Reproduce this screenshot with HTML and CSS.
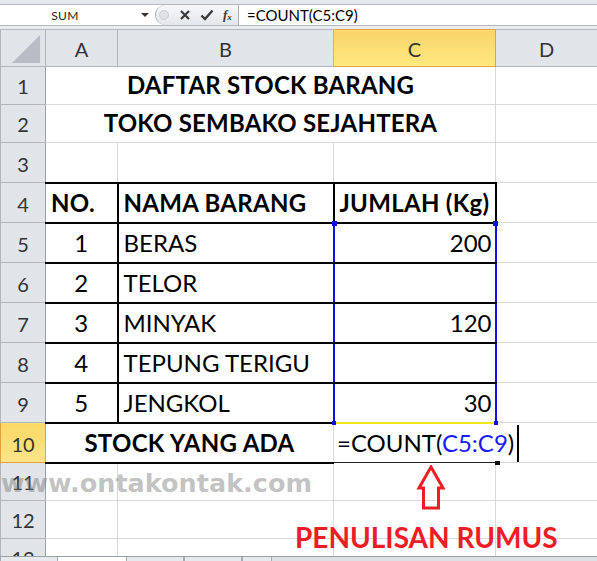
FILE: index.html
```html
<!DOCTYPE html>
<html>
<head>
<meta charset="utf-8">
<link rel="stylesheet" href="styles.css">
</head>
<body>
<div class="app">
  <div class="top"></div>
  <div class="fbar">
    <div class="namebox"><span class="name">SUM</span><span class="dd"></span></div>
    <div class="btns">
      <span class="grip"></span>
      <svg class="ico" width="12" height="12" viewBox="0 0 12 12"><path d="M2 2 L10 10 M10 2 L2 10" stroke="#3a3a3a" stroke-width="2.2" fill="none"/></svg>
      <svg class="ico" width="14" height="12" viewBox="0 0 14 12"><path d="M1.5 6.5 L5 10 L12.5 1.5" stroke="#3a3a3a" stroke-width="2.4" fill="none"/></svg>
      <span class="fx">f<sub>x</sub></span>
    </div>
    <div class="formula">=COUNT(C5:C9)</div>
  </div>
  <div class="sep"></div>
  <table class="sheet">
    <colgroup><col class="c0"><col class="c1"><col class="c2"><col class="c3"><col class="c4"></colgroup>
    <tr class="hdr">
      <td class="corner"><svg width="29" height="28" viewBox="0 0 29 28"><polygon points="28,0 28,28 0,28" fill="#b8bdc5"/></svg></td>
      <td class="ch">A</td><td class="ch">B</td><td class="ch chsel">C</td><td class="ch">D</td>
    </tr>
    <tr class="r38">
      <td class="rh">1</td><td colspan="3" class="title">DAFTAR STOCK BARANG</td><td></td>
    </tr>
    <tr class="r38">
      <td class="rh">2</td><td colspan="3" class="title">TOKO SEMBAKO SEJAHTERA</td><td></td>
    </tr>
    <tr class="r40">
      <td class="rh">3</td><td></td><td></td><td></td><td></td>
    </tr>
    <tr class="r40">
      <td class="rh">4</td>
      <td class="bx bold left">NO.</td>
      <td class="bx bold left">NAMA BARANG</td>
      <td class="bx bold left">JUMLAH (Kg)</td>
      <td></td>
    </tr>
    <tr class="r40">
      <td class="rh">5</td><td class="bx center">1</td><td class="bx bnr left">BERAS</td>
      <td class="bx rng right"><span class="mk tl"></span><span class="mk tr"></span>200</td><td></td>
    </tr>
    <tr class="r40">
      <td class="rh">6</td><td class="bx center">2</td><td class="bx bnr left">TELOR</td>
      <td class="bx rng right"></td><td></td>
    </tr>
    <tr class="r40">
      <td class="rh">7</td><td class="bx center">3</td><td class="bx bnr left">MINYAK</td>
      <td class="bx rng right">120</td><td></td>
    </tr>
    <tr class="r40">
      <td class="rh">8</td><td class="bx center">4</td><td class="bx bnr left">TEPUNG TERIGU</td>
      <td class="bx rng right"></td><td></td>
    </tr>
    <tr class="r40">
      <td class="rh">9</td><td class="bx center">5</td><td class="bx bnr left">JENGKOL</td>
      <td class="bx rng rlast right"><span class="mk bl"></span><span class="mk br"></span>30</td><td></td>
    </tr>
    <tr class="r40">
      <td class="rh rhsel">10</td>
      <td colspan="2" class="bx bnr bold center">STOCK YANG ADA</td>
      <td class="edit"><span class="etxt">=COUNT(<span class="ref">C5:C9</span>)</span><span class="cursor"></span><span class="emk"></span></td>
      <td class="nol"></td>
    </tr>
    <tr class="r38">
      <td class="rh">11</td><td></td><td></td><td></td><td></td>
    </tr>
    <tr class="r38">
      <td class="rh">12</td><td></td><td></td><td></td><td></td>
    </tr>
    <tr class="r38">
      <td class="rh">13</td><td></td><td></td><td></td><td></td>
    </tr>
  </table>

  <div class="watermark">www.ontakontak.com</div>
  <svg class="arrow" width="30" height="46" viewBox="0 0 30 46"><polygon points="15,2 27,23 22.5,23 22.5,43 7.5,43 7.5,23 3,23" fill="none" stroke="#ee1c25" stroke-width="3" stroke-linejoin="miter"/></svg>
  <div class="note">PENULISAN RUMUS</div>
  <div class="tabs"><span class="tab t0"></span><span class="tab active"></span><span class="tab t2"></span><span class="tab t3"></span><span class="tab t4"></span></div>
</div>
</body>
</html>
```
FILE: styles.css
```css
html, body { margin: 0; padding: 0; }
body { width: 597px; height: 561px; overflow: hidden; background: #fff; font-family: Lato, "Open Sans", sans-serif; }
.app { position: relative; width: 597px; height: 561px; overflow: hidden; }

.top { height: 4px; background: #e4e7eb; border-bottom: 1px solid #b4b9c0; }
.fbar { height: 20px; display: flex; background: #fff; border-bottom: 1px solid #b4b9c0; }
.namebox { width: 155px; display: flex; align-items: center; }
.name { width: 130px; text-align: center; font-size: 12px; color: #222; letter-spacing: 0.3px; }
.dd { width: 0; height: 0; border-left: 4px solid transparent; border-right: 4px solid transparent; border-top: 4px solid #333; margin-left: 11px; }
.btns { width: 84px; display: flex; align-items: center; gap: 9px; background: linear-gradient(#f6f7f9, #e3e6ea); border-left: 1px solid #a9aeb6; border-right: 1px solid #a9aeb6; border-radius: 10px 0 0 10px; box-sizing: border-box; padding-left: 3px; }
.grip { width: 8px; height: 8px; border-radius: 50%; background: #dfe2e6; border: 1px solid #c9cdd3; margin-right: 1px; }
.ico { display: block; }
.fx { font-family: "Liberation Serif", serif; font-style: italic; font-weight: bold; font-size: 13px; color: #3a3a3a; line-height: 1; }
.fx sub { font-size: 9px; vertical-align: -1px; }
.formula { flex: 1; padding-left: 8px; font-size: 15px; line-height: 20px; color: #000; }
.sep { height: 3px; background: #e9ecf0; }

table.sheet { border-collapse: collapse; table-layout: fixed; width: 597px; }
col.c0 { width: 45px; }
col.c1 { width: 72px; }
col.c2 { width: 216px; }
col.c3 { width: 162px; }
col.c4 { width: 102px; }
.sheet td { border: 1px solid #d9d9d9; padding: 0 4px 5px; font-size: 24px; line-height: 28px; vertical-align: bottom; white-space: nowrap; color: #000; overflow: visible; }
tr.hdr { height: 37px; }
tr.r38 { height: 38px; }
tr.r40 { height: 40px; }

.sheet td.corner { background: #e1e4e9; border: 1px solid #b1b6bd; padding: 0 4px 3px 0; text-align: right; vertical-align: bottom; line-height: 0; }
.sheet td.ch { background: #e1e4e9; border: 1px solid #b1b6bd; text-align: center; font-size: 20px; line-height: 24px; color: #333; padding-bottom: 5px; }
.sheet td.chsel { background: linear-gradient(#f9d46a, #fee97f); border: 1px solid #e2a23c; }
.sheet td.rh { background: #e1e4e9; border: 1px solid #b1b6bd; border-right: 1px solid #9aa0a9; text-align: center; font-size: 20px; line-height: 24px; color: #333; padding: 0 0 6px; }
.sheet td.rhsel { background: linear-gradient(#fbd866, #fee58a); border: 1px solid #e2a23c; }

.title { font-weight: bold; text-align: center; letter-spacing: 0.2px; }
.bold { font-weight: bold; letter-spacing: 0.3px; }
.left { text-align: left; }
.center { text-align: center; }
.right { text-align: right; }
.sheet td.left { padding-left: 5px; }
.sheet td.right { padding-right: 3px; }

.sheet td.bx { border-top: 2px solid #000; border-bottom: 2px solid #000; border-right: 2px solid #000; }
.sheet td.bnr { border-right: 1px solid #d9d9d9; }
.sheet td.rng { border-left: 2px solid #1010e8; border-right: 2px solid #1010e8; position: relative; }
.sheet td.rlast { border-bottom: 2px solid #f4ea1a; }
.mk { position: absolute; width: 5px; height: 5px; background: #1010e8; }
.mk.tl { left: -3px; top: -3px; }
.mk.tr { right: -3px; top: -3px; }
.mk.bl { left: -3px; bottom: -3px; width: 4px; height: 4px; }
.mk.br { right: -3px; bottom: -3px; width: 4px; height: 4px; }

.sheet td.edit { border-top: 1px solid #f4ea1a; border-bottom: 1px solid #222; border-right-style: hidden; position: relative; padding-left: 3px; }
.ref { color: #1a1aff; }
.cursor { position: absolute; left: 183px; top: 1px; bottom: 0; width: 2px; background: #000; }
.emk { position: absolute; right: -4px; bottom: -3px; width: 5px; height: 4px; background: #111; }

.tabs { position: absolute; left: 0; top: 556px; width: 597px; height: 5px; background: #dde1e6; border-top: 1px solid #9aa0a8; display: flex; }
.tab { height: 5px; border: 1px solid #a5abb3; border-top: none; background: #e6e9ed; }
.tab.t0 { width: 56px; }
.tab.active { width: 66px; background: #fff; border-color: #fff; }
.tab.t2 { width: 56px; }
.tab.t3 { width: 56px; }
.tab.t4 { width: 28px; }

.watermark { position: absolute; left: 1px; top: 468px; font-family: "DejaVu Sans", sans-serif; font-weight: bold; font-size: 25.5px; line-height: 30px; color: rgba(120,120,120,0.45); white-space: nowrap; }
.arrow { position: absolute; left: 416px; top: 465px; }
.note { position: absolute; left: 295px; top: 520px; font-weight: bold; font-size: 28px; line-height: 34px; color: #ee1c25; white-space: nowrap; }
```
